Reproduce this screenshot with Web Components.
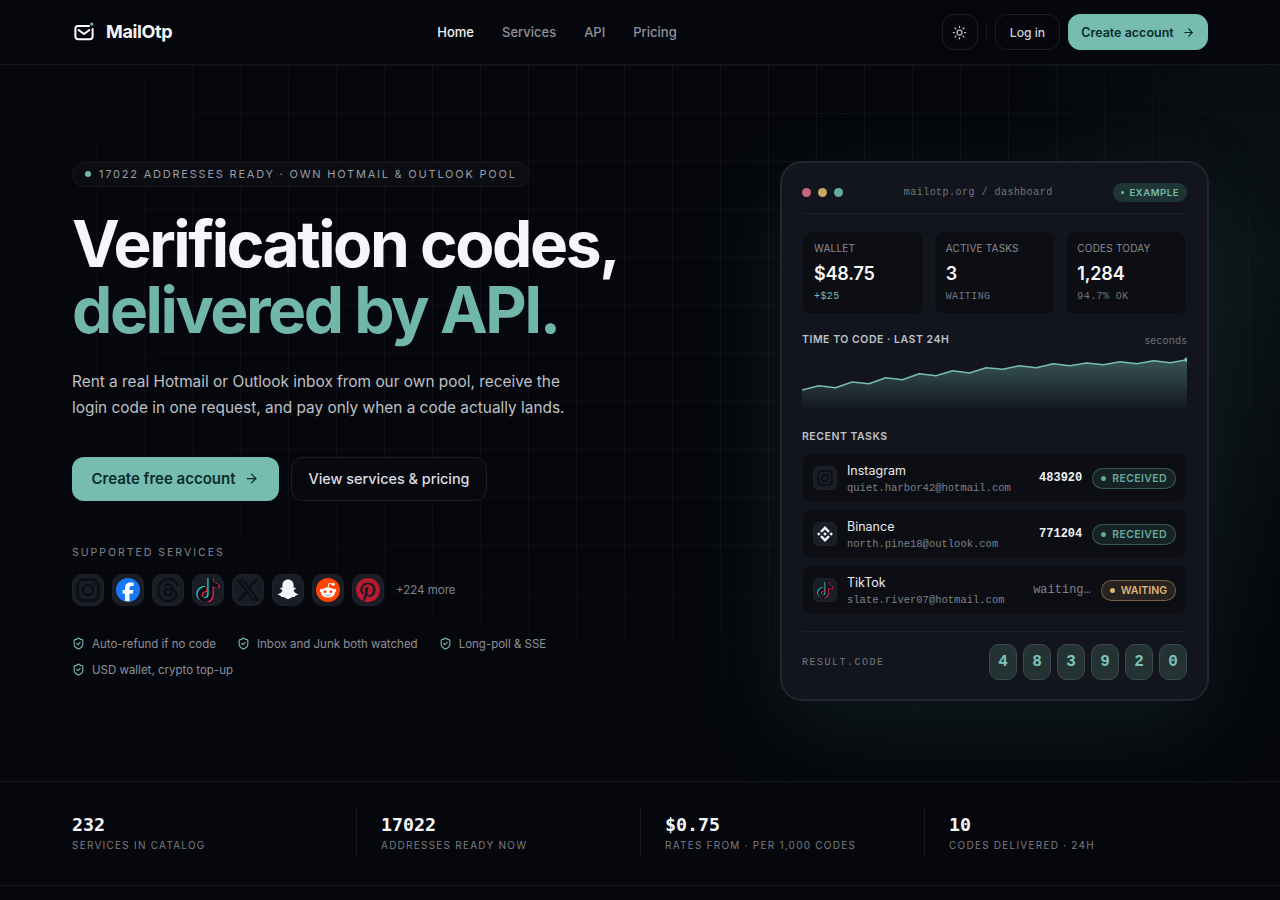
<!DOCTYPE html>
<html lang="en">
<head>
<meta charset="utf-8">
<title>MailOtp</title>
<style>
  html, body { margin: 0; padding: 0; background: #05070c; }
  body { font-family: Inter, "Liberation Sans", sans-serif; color: #e8eaee; height: 900px; overflow: hidden; }
</style>
</head>
<body>
<mo-header></mo-header>
<mo-hero>
  <mo-copy slot="copy"></mo-copy>
  <mo-dashboard slot="panel"></mo-dashboard>
</mo-hero>
<mo-stats>
  <mo-stat value="232" label="Services in catalog"></mo-stat>
  <mo-stat value="17022" label="Addresses ready now"></mo-stat>
  <mo-stat value="$0.75" label="Rates from · per 1,000 codes"></mo-stat>
  <mo-stat value="10" label="Codes delivered · 24h"></mo-stat>
</mo-stats>

<script>
const ARROW = `<svg width="14" height="14" viewBox="0 0 24 24" fill="none" stroke="currentColor" stroke-width="2" stroke-linecap="round" stroke-linejoin="round"><path d="M5 12h14"/><path d="m12 5 7 7-7 7"/></svg>`;

const TIKTOK_PATH = 'M12.525.02c1.31-.02 2.61-.01 3.91-.02.08 1.53.63 3.09 1.75 4.17 1.12 1.11 2.7 1.62 4.24 1.79v4.03c-1.44-.05-2.89-.35-4.2-.97-.57-.26-1.1-.59-1.62-.93-.01 2.92.01 5.84-.02 8.75-.08 1.4-.54 2.79-1.35 3.94-1.31 1.92-3.58 3.17-5.91 3.21-1.43.08-2.86-.31-4.08-1.03-2.02-1.19-3.44-3.37-3.65-5.71-.02-.5-.03-1-.01-1.49.18-1.9 1.12-3.72 2.58-4.96 1.66-1.44 3.98-2.13 6.15-1.72.02 1.48-.04 2.96-.04 4.44-.99-.32-2.15-.23-3.02.37-.63.41-1.11 1.04-1.36 1.75-.21.51-.15 1.07-.14 1.61.24 1.64 1.82 3.02 3.5 2.87 1.12-.01 2.19-.66 2.77-1.61.19-.33.4-.67.41-1.06.1-1.79.06-3.57.07-5.36.01-4.03-.01-8.05.02-12.07z';

const ICONS = {
  instagram: `<rect x="1.5" y="1.5" width="21" height="21" rx="6" fill="none" stroke="#0c0e13" stroke-width="2.4"/><circle cx="12" cy="12" r="5" fill="none" stroke="#0c0e13" stroke-width="2.4"/><circle cx="18.2" cy="5.8" r="1.4" fill="#0c0e13"/>`,
  facebook: `<circle cx="12" cy="12" r="11.4" fill="#fff"/><path fill="#1877F2" d="M9.101 23.691v-7.98H6.627v-3.667h2.474v-1.58c0-4.085 1.848-5.978 5.858-5.978.401 0 .955.042 1.468.103a8.68 8.68 0 0 1 1.141.195v3.325a8.623 8.623 0 0 0-.653-.036 26.805 26.805 0 0 0-.733-.009c-.707 0-1.259.096-1.675.309a1.686 1.686 0 0 0-.679.622c-.258.42-.374.995-.374 1.752v1.297h3.919l-.386 2.103-.287 1.564h-3.246v8.245C19.396 23.238 24 18.179 24 12.044c0-6.627-5.373-12-12-12s-12 5.373-12 12c0 5.628 3.874 10.35 9.101 11.647Z"/>`,
  threads: `<path fill="#0c0e13" d="M12.186 24h-.007c-3.581-.024-6.334-1.205-8.184-3.509C2.35 18.44 1.5 15.586 1.472 12.01v-.017c.03-3.579.879-6.43 2.525-8.482C5.845 1.205 8.6.024 12.18 0h.014c2.746.02 5.043.725 6.826 2.098 1.677 1.29 2.858 3.13 3.509 5.467l-2.04.569c-1.104-3.96-3.898-5.984-8.304-6.015-2.91.022-5.11.936-6.54 2.717C4.307 6.504 3.616 8.914 3.589 12c.027 3.086.718 5.496 2.057 7.164 1.43 1.783 3.631 2.698 6.54 2.717 2.623-.02 4.358-.631 5.8-2.045 1.647-1.613 1.618-3.593 1.09-4.798-.31-.71-.873-1.3-1.634-1.75-.192 1.352-.622 2.446-1.284 3.272-.886 1.102-2.14 1.704-3.73 1.79-1.202.065-2.361-.218-3.259-.801-1.063-.689-1.685-1.74-1.752-2.964-.065-1.19.408-2.285 1.33-3.082.88-.76 2.119-1.207 3.583-1.291a13.853 13.853 0 0 1 3.02.142c-.126-.742-.375-1.332-.75-1.757-.513-.586-1.308-.883-2.359-.89h-.029c-.844 0-1.992.232-2.721 1.32L7.734 7.847c.98-1.454 2.568-2.256 4.478-2.256h.044c3.194.02 5.097 1.975 5.287 5.388.108.046.216.094.321.142 1.49.7 2.58 1.761 3.154 3.07.797 1.82.871 4.79-1.548 7.158-1.85 1.81-4.094 2.628-7.277 2.65Zm1.003-11.69c-.242 0-.487.007-.739.021-1.836.103-2.98.946-2.916 2.143.067 1.256 1.452 1.839 2.784 1.767 1.224-.065 2.818-.543 3.086-3.71a10.5 10.5 0 0 0-2.215-.221z"/>`,
  tiktok: `<path fill="#25F4EE" transform="translate(-1.1 -.6)" d="${TIKTOK_PATH}"/><path fill="#FE2C55" transform="translate(1.1 .6)" d="${TIKTOK_PATH}"/><path fill="#0c0e13" d="${TIKTOK_PATH}"/>`,
  x: `<path fill="#0c0e13" d="M18.901 1.153h3.68l-8.04 9.19L24 22.846h-7.406l-5.8-7.584-6.638 7.584H.474l8.6-9.83L0 1.154h7.594l5.243 6.932ZM17.61 20.644h2.039L6.486 3.24H4.298Z"/>`,
  snapchat: `<path fill="#f2f5fa" d="M12 1.6c3.2 0 5.5 2.3 5.6 5.5l.05 2.7c.6.1 1.3-.2 1.75 0 .65.3.45 1.05-.2 1.35-.6.3-1.5.5-1.6 1 .4 1.7 2.1 3.4 4 3.9.65.2.55.85 0 1.05-.75.3-1.7.45-2.3.65-.3.4-.1 1.15-.55 1.25-.75.2-1.9-.2-3 .2-.95.4-1.9 1.8-3.75 1.8s-2.8-1.4-3.75-1.8c-1.1-.4-2.25 0-3-.2-.45-.1-.25-.85-.55-1.25-.6-.2-1.55-.35-2.3-.65-.55-.2-.65-.85 0-1.05 1.9-.5 3.6-2.2 4-3.9-.1-.5-1-.7-1.6-1-.65-.3-.85-1.05-.2-1.35.45-.2 1.15.1 1.75 0l.05-2.7C6.5 3.9 8.8 1.6 12 1.6z"/>`,
  reddit: `<circle cx="12" cy="12" r="12" fill="#FF4500"/><path d="M12 9.8 13 5.4l3.6.8" fill="none" stroke="#fff" stroke-width="1"/><circle cx="17.3" cy="6.3" r="1.5" fill="#fff"/><circle cx="5.7" cy="12.6" r="1.9" fill="#fff"/><circle cx="18.3" cy="12.6" r="1.9" fill="#fff"/><ellipse cx="12" cy="14.6" rx="7" ry="5" fill="#fff"/><circle cx="9.1" cy="13.7" r="1.4" fill="#FF4500"/><circle cx="14.9" cy="13.7" r="1.4" fill="#FF4500"/><path d="M9.2 16.9c1.6 1.1 4 1.1 5.6 0" fill="none" stroke="#8a8f99" stroke-width=".9" stroke-linecap="round"/>`,
  pinterest: `<path fill="#BD1A30" d="M12.017 0C5.396 0 .029 5.367.029 11.987c0 5.079 3.158 9.417 7.618 11.162-.105-.949-.199-2.403.041-3.439.219-.937 1.406-5.957 1.406-5.957s-.359-.72-.359-1.781c0-1.663.967-2.911 2.168-2.911 1.024 0 1.518.769 1.518 1.688 0 1.029-.653 2.567-.992 3.992-.285 1.193.6 2.165 1.775 2.165 2.128 0 3.768-2.245 3.768-5.487 0-2.861-2.063-4.869-5.008-4.869-3.41 0-5.409 2.562-5.409 5.199 0 1.033.394 2.143.889 2.741.099.12.112.225.085.345-.09.375-.293 1.199-.334 1.363-.053.225-.172.271-.401.165-1.495-.69-2.433-2.878-2.433-4.646 0-3.776 2.748-7.252 7.92-7.252 4.158 0 7.392 2.967 7.392 6.923 0 4.135-2.607 7.462-6.233 7.462-1.214 0-2.354-.629-2.758-1.379l-.749 2.848c-.269 1.045-1.004 2.352-1.498 3.146 1.123.345 2.306.535 3.55.535 6.607 0 11.985-5.365 11.985-11.987C23.97 5.39 18.592.026 11.985.026L12.017 0z"/>`,
  binance: `<path fill="#f4f5f8" d="M16.624 13.9202l2.7175 2.7154-7.353 7.353-7.353-7.352 2.7175-2.7164 4.6355 4.6595 4.6356-4.6595zm4.6366-4.6366L24 12l-2.7154 2.7164L18.5682 12l2.6924-2.7164zm-9.272.001l2.7163 2.6914-2.7164 2.7174v-.001L9.2721 12l2.7164-2.7154zm-9.2722-.001L5.4088 12l-2.6914 2.6924L0 12l2.7164-2.7164zM11.9885.0115l7.353 7.329-2.7174 2.7154-4.6356-4.6356-4.6355 4.6595-2.7174-2.7154 7.353-7.353z"/>`
};

class MoServiceIcon extends HTMLElement {
  constructor() {
    super();
    const box = parseInt(this.getAttribute('box') || '32');
    const size = parseInt(this.getAttribute('size') || '24');
    const radius = this.getAttribute('radius') || '10';
    this.attachShadow({ mode: 'open' }).innerHTML = `
      <style>
        :host { display: flex; align-items: center; justify-content: center; flex: none;
          width: ${box}px; height: ${box}px; border-radius: ${radius}px; box-sizing: border-box;
          background: #1a1d26; border: 1px solid #1f222c; }
        svg { display: block; }
      </style>
      <svg width="${size}" height="${size}" viewBox="0 0 24 24">${ICONS[this.getAttribute('name')]}</svg>`;
  }
}
customElements.define('mo-service-icon', MoServiceIcon);

const headerTemplate = document.createElement('template');
headerTemplate.innerHTML = `
  <style>
    :host { display: block; border-bottom: 1px solid #14171d; background: #05070c; }
    .bar { height: 64px; margin: 0 72px; display: flex; align-items: center; justify-content: space-between; }
    .logo { display: flex; align-items: center; gap: 10px; font-size: 18px; font-weight: 700; color: #f5f6f8; letter-spacing: -0.02em; width: 102px; }
    .logo svg { display: block; flex: none; }
    .logo span { margin-top: -2px; }
    nav { display: flex; gap: 28px; font-size: 13px; font-weight: 500; color: #8e929b; margin-right: 2px; }
    nav .active { color: #f2f3f5; }
    .actions { display: flex; align-items: center; gap: 8px; }
    .btn { height: 36px; box-sizing: border-box; border-radius: 12px; display: flex; align-items: center; justify-content: center;
      font-size: 12.5px; font-weight: 500; border: 1px solid #1b1e25; color: #dfe1e5; }
    .theme { width: 36px; color: #b9bcc2; }
    .sep { width: 1px; height: 20px; background: #15181e; }
    .login { width: 65px; font-size: 12.2px; color: #cfd1d6; }
    .create { width: 140px; gap: 8px; background: #76bcb1; border-color: #76bcb1; color: #0a2c2a; font-weight: 600; }
    .create svg { width: 13px; height: 13px; }
  </style>
  <div class="bar">
    <div class="logo">
      <svg width="24" height="24" viewBox="0 0 24 24" fill="none" stroke="#fff" stroke-width="2" stroke-linecap="round" stroke-linejoin="round">
        <path d="M17 6H6a2.6 2.6 0 0 0-2.6 2.6v8A2.6 2.6 0 0 0 6 19.2h12a2.6 2.6 0 0 0 2.6-2.6V9"/>
        <path d="m6.6 10 5.4 4 5.4-4"/>
        <circle cx="19.8" cy="4" r="1.6" fill="#76bcb1" stroke="none"/>
      </svg>
      <span>MailOtp</span>
    </div>
    <nav>
      <span class="active">Home</span>
      <span>Services</span>
      <span>API</span>
      <span>Pricing</span>
    </nav>
    <div class="actions">
      <div class="btn theme">
        <svg width="15" height="15" viewBox="0 0 24 24" fill="none" stroke="currentColor" stroke-width="2" stroke-linecap="round"><circle cx="12" cy="12" r="4"/><path d="M12 2v2M12 20v2M4.9 4.9l1.4 1.4M17.7 17.7l1.4 1.4M2 12h2M20 12h2M6.3 17.7l-1.4 1.4M19.1 4.9l-1.4 1.4"/></svg>
      </div>
      <div class="sep"></div>
      <div class="btn login">Log in</div>
      <div class="btn create">Create account ${ARROW}</div>
    </div>
  </div>
`;

class MoHeader extends HTMLElement {
  constructor() {
    super();
    this.attachShadow({ mode: 'open' }).appendChild(headerTemplate.content.cloneNode(true));
  }
}
customElements.define('mo-header', MoHeader);

const heroTemplate = document.createElement('template');
heroTemplate.innerHTML = `
  <style>
    :host { display: block; position: relative; height: 716px; overflow: hidden; }
    .grid { position: absolute; inset: 0;
      background-image: linear-gradient(rgba(255,255,255,.045) 1px, transparent 1px), linear-gradient(90deg, rgba(255,255,255,.045) 1px, transparent 1px);
      background-size: 48px 48px;
      -webkit-mask-image: radial-gradient(ellipse 62% 72% at 50% 28%, #000 45%, transparent 100%);
      mask-image: radial-gradient(ellipse 62% 72% at 50% 28%, #000 45%, transparent 100%); }
    .glow { position: absolute; inset: 0;
      background: radial-gradient(ellipse 280px 380px at 1260px 200px, rgba(90,170,155,.07), transparent 100%); }
    .inner { position: relative; margin: 0 71px 0 72px; padding-top: 96px; display: flex; justify-content: space-between; align-items: flex-start; }
  </style>
  <div class="grid"></div>
  <div class="glow"></div>
  <div class="inner">
    <slot name="copy"></slot>
    <slot name="panel"></slot>
  </div>
`;

class MoHero extends HTMLElement {
  constructor() {
    super();
    this.attachShadow({ mode: 'open' }).appendChild(heroTemplate.content.cloneNode(true));
  }
}
customElements.define('mo-hero', MoHero);

const copyTemplate = document.createElement('template');
copyTemplate.innerHTML = `
  <style>
    :host { display: block; width: 600px; }
    .eyebrow { display: inline-flex; align-items: center; gap: 8px; height: 25px; box-sizing: border-box; padding: 0 12px; border-radius: 999px;
      border: 1px solid #15181f; background: #0b0d13; font-size: 11px; font-weight: 400; letter-spacing: .162em; color: #9a9da4; white-space: nowrap; }
    .eyebrow i { width: 6px; height: 6px; border-radius: 50%; background: #76bcb1; }
    h1 { margin: 24px 0 0; font-size: 64px; line-height: 66px; font-weight: 700; letter-spacing: -0.038em; color: #f5f6fa; white-space: nowrap; }
    h1 span { color: #70b6ab; display: block; }
    p { margin: 26px 0 0; font-size: 15.4px; line-height: 26px; color: #bec1c7; white-space: nowrap; }
    .cta { display: flex; gap: 12px; margin-top: 36px; }
    .cta div { height: 44px; box-sizing: border-box; border-radius: 12px; display: flex; align-items: center; justify-content: center; font-weight: 500; }
    .primary { width: 207px; gap: 9px; background: #76bcb1; color: #0a2c2a; font-size: 15px; font-weight: 600 !important; }
    .primary svg { width: 15px; height: 15px; }
    .secondary { width: 196px; border: 1px solid #1b1e25; color: #dcdee2; background: #07090e; font-size: 14.4px; }
    .label { margin-top: 45px; font-size: 10.5px; line-height: 13px; letter-spacing: .19em; color: #83868d; }
    .services { display: flex; align-items: center; gap: 8px; margin-top: 15px; }
    .more { margin-left: 4px; font-size: 11.5px; color: #80838a; }
    ul { list-style: none; margin: 30px 0 0; padding: 0; display: flex; flex-wrap: wrap; gap: 10px 21px; width: 500px; }
    li { display: flex; align-items: center; gap: 7px; font-size: 11.5px; line-height: 16px; color: #8e9198; }
    li svg { flex: none; }
  </style>
  <div class="eyebrow"><i></i>17022 ADDRESSES READY · OWN HOTMAIL &amp; OUTLOOK POOL</div>
  <h1>Verification codes,<span>delivered by API.</span></h1>
  <p>Rent a real Hotmail or Outlook inbox from our own pool, receive the<br>login code in one request, and pay only when a code actually lands.</p>
  <div class="cta">
    <div class="primary">Create free account ${ARROW}</div>
    <div class="secondary">View services &amp; pricing</div>
  </div>
  <div class="label">SUPPORTED SERVICES</div>
  <div class="services">
    <mo-service-icon name="instagram"></mo-service-icon>
    <mo-service-icon name="facebook"></mo-service-icon>
    <mo-service-icon name="threads"></mo-service-icon>
    <mo-service-icon name="tiktok"></mo-service-icon>
    <mo-service-icon name="x"></mo-service-icon>
    <mo-service-icon name="snapchat"></mo-service-icon>
    <mo-service-icon name="reddit"></mo-service-icon>
    <mo-service-icon name="pinterest"></mo-service-icon>
    <span class="more">+224 more</span>
  </div>
  <ul id="perks"></ul>
`;

const SHIELD = `<svg width="13" height="13" viewBox="0 0 24 24" fill="none" stroke="#76bcb1" stroke-width="2" stroke-linecap="round" stroke-linejoin="round"><path d="M20 13c0 5-3.5 7.5-7.66 8.95a1 1 0 0 1-.67-.01C7.5 20.5 4 18 4 13V6a1 1 0 0 1 1-1c2 0 4.5-1.2 6.24-2.72a1.17 1.17 0 0 1 1.52 0C14.51 3.81 17 5 19 5a1 1 0 0 1 1 1z"/><path d="m9 12 2 2 4-4"/></svg>`;

class MoCopy extends HTMLElement {
  constructor() {
    super();
    this.attachShadow({ mode: 'open' }).appendChild(copyTemplate.content.cloneNode(true));
    this.shadowRoot.querySelector('#perks').innerHTML = [
      'Auto-refund if no code',
      'Inbox and Junk both watched',
      'Long-poll &amp; SSE',
      'USD wallet, crypto top-up',
    ].map((t) => `<li>${SHIELD}${t}</li>`).join('');
  }
}
customElements.define('mo-copy', MoCopy);

class MoTile extends HTMLElement {
  constructor() {
    super();
    const good = this.hasAttribute('good');
    this.attachShadow({ mode: 'open' }).innerHTML = `
      <style>
        :host { display: block; height: 84px; box-sizing: border-box; padding: 10px 11px 0; border-radius: 10px; background: #0c0e14; border: 1px solid #15181f; }
        .k { font-size: 10px; line-height: 13px; letter-spacing: .02em; color: #8a8d94; white-space: nowrap; }
        .v { margin-top: 7px; font-size: 18px; line-height: 24px; font-weight: 600; letter-spacing: -.01em; color: #f6f7f9; }
        .s { margin-top: 4px; font-family: "Liberation Mono", monospace; font-size: 10px; line-height: 13px; letter-spacing: .04em; color: ${good ? '#76bcb1' : '#74777e'}; }
      </style>
      <div class="k">${this.getAttribute('label')}</div>
      <div class="v">${this.getAttribute('value')}</div>
      <div class="s">${this.getAttribute('sub')}</div>`;
  }
}
customElements.define('mo-tile', MoTile);

class MoTask extends HTMLElement {
  constructor() {
    super();
    const waiting = this.getAttribute('status') === 'WAITING';
    const tone = waiting ? '224,180,118' : '100,170,158';
    this.attachShadow({ mode: 'open' }).innerHTML = `
      <style>
        :host { display: flex; align-items: center; height: 50px; box-sizing: border-box; padding: 0 10px; border-radius: 10px; background: #0c0e14; border: 1px solid #13161c; }
        .who { margin-left: 10px; flex: 1; min-width: 0; padding-top: 2px; }
        .name { font-size: 12.5px; line-height: 16px; color: #e9ebee; }
        .mail { font-family: "Liberation Mono", monospace; font-size: 10.5px; line-height: 14px; margin-top: 2px; color: #7d8086; white-space: nowrap; }
        .code { font-family: "Liberation Mono", monospace; font-size: 12px; font-weight: 700; color: #eef0f3; margin-right: 10px; }
        .code.wait { font-weight: 400; color: #7d8086; }
        .pill { display: flex; align-items: center; gap: 6px; height: 21px; box-sizing: border-box; padding: 0 8px; border-radius: 999px; font-size: 10.5px; font-weight: 600; letter-spacing: ${waiting ? '0' : '.035em'};
          color: rgb(${tone}); border: 1px solid rgba(${tone},.42); background: rgba(${tone},.13); white-space: nowrap; }
        .pill i { width: 5px; height: 5px; border-radius: 50%; background: rgb(${tone}); }
      </style>
      <mo-service-icon name="${this.getAttribute('icon')}" box="24" size="16" radius="6"></mo-service-icon>
      <div class="who">
        <div class="name">${this.getAttribute('name')}</div>
        <div class="mail">${this.getAttribute('mail')}</div>
      </div>
      <span class="code ${waiting ? 'wait' : ''}">${this.getAttribute('code')}</span>
      <span class="pill"><i></i>${this.getAttribute('status')}</span>`;
  }
}
customElements.define('mo-task', MoTask);

const dashTemplate = document.createElement('template');
dashTemplate.innerHTML = `
  <style>
    :host { display: block; width: 429px; height: 540px; box-sizing: border-box; padding: 0 20px; border-radius: 22px;
      background: #12151d; border: 2px solid #22262e;
      box-shadow: 0 30px 100px rgba(90,170,155,.12); }
    .top { height: 51px; box-sizing: border-box; padding-top: 8px; display: flex; align-items: center; justify-content: space-between; border-bottom: 1px solid #1d2028; }
    .dots { display: flex; gap: 7px; flex: none; }
    .dots i { width: 9px; height: 9px; border-radius: 50%; }
    .url { font-family: "Liberation Mono", monospace; font-size: 10px; letter-spacing: .048em; color: #74777e; }
    .tag { display: flex; align-items: center; gap: 5px; height: 19px; padding: 0 8px; border-radius: 999px; background: #1f3533; color: #76bcb1; font-size: 9.5px; font-weight: 600; letter-spacing: .06em; }
    .tag i { width: 3px; height: 3px; border-radius: 50%; background: #76bcb1; }
    .tiles { display: grid; grid-template-columns: repeat(3, 1fr); gap: 10px; margin-top: 17px; }
    .head { display: flex; justify-content: space-between; align-items: center; margin-top: 18px; height: 13px; }
    .title { font-size: 10.5px; font-weight: 600; letter-spacing: .05em; color: #bfc2c8; }
    .unit { font-family: Inter, sans-serif; font-size: 10px; letter-spacing: .03em; color: #6e7178; }
    svg.chart { display: block; margin-top: 9px; }
    .recent { margin-top: 19px; height: 13px; }
    .tasks { display: flex; flex-direction: column; gap: 6px; margin-top: 10px; }
    .result { display: flex; justify-content: space-between; align-items: center; margin-top: 16px; padding-top: 12px; border-top: 1px solid #1d2028; }
    .result .lbl { font-family: "Liberation Mono", monospace; font-size: 10px; letter-spacing: .15em; color: #74777e; }
    .digits { display: flex; gap: 6px; }
    .digits span { width: 28px; height: 36px; box-sizing: border-box; border-radius: 10px; display: flex; align-items: center; justify-content: center;
      font-family: "Liberation Mono", monospace; font-size: 16px; font-weight: 700; color: #7cc4b8; background: #243234; border: 1px solid #3c4b4e; }
  </style>
  <div class="top">
    <div class="dots">
      <i style="background:#c9647f"></i><i style="background:#c9a566"></i><i style="background:#64aca1"></i>
    </div>
    <div class="url">mailotp.org / dashboard</div>
    <div class="tag"><i></i>EXAMPLE</div>
  </div>
  <div class="tiles">
    <mo-tile label="WALLET" value="$48.75" sub="+$25" good></mo-tile>
    <mo-tile label="ACTIVE TASKS" value="3" sub="WAITING"></mo-tile>
    <mo-tile label="CODES TODAY" value="1,284" sub="94.7% OK"></mo-tile>
  </div>
  <div class="head"><span class="title">TIME TO CODE · LAST 24H</span><span class="unit">seconds</span></div>
  <svg class="chart" width="385" height="56" viewBox="0 0 385 56">
    <defs><linearGradient id="fade" x1="0" y1="0" x2="0" y2="1"><stop offset="0" stop-color="#76bcb1" stop-opacity=".38"/><stop offset="1" stop-color="#76bcb1" stop-opacity="0"/></linearGradient></defs>
    <path id="area" fill="url(#fade)"/>
    <polyline id="line" fill="none" stroke="#76bcb1" stroke-width="1.5" stroke-linejoin="round"/>
    <circle cx="384.5" cy="4.7" r="2.2" fill="#76bcb1"/>
  </svg>
  <div class="title recent">RECENT TASKS</div>
  <div class="tasks">
    <mo-task icon="instagram" name="Instagram" mail="quiet.harbor42@hotmail.com" code="483920" status="RECEIVED"></mo-task>
    <mo-task icon="binance" name="Binance" mail="north.pine18@outlook.com" code="771204" status="RECEIVED"></mo-task>
    <mo-task icon="tiktok" name="TikTok" mail="slate.river07@hotmail.com" code="waiting…" status="WAITING"></mo-task>
  </div>
  <div class="result">
    <span class="lbl">RESULT.CODE</span>
    <div class="digits"><span>4</span><span>8</span><span>3</span><span>9</span><span>2</span><span>0</span></div>
  </div>
`;

class MoDashboard extends HTMLElement {
  constructor() {
    super();
    this.attachShadow({ mode: 'open' }).appendChild(dashTemplate.content.cloneNode(true));
    const ys = [35, 30.7, 32.7, 27, 28.7, 22.7, 24.7, 18.7, 20.7, 15.7, 18, 12.7, 14.3, 10.7, 12.7, 8.7, 10.7, 8, 9.7, 6.7, 8.7, 5.7, 7.7, 4.7];
    const pts = ys.map((y, i) => `${(i * 385 / 23).toFixed(1)},${y}`);
    this.shadowRoot.querySelector('#line').setAttribute('points', pts.join(' '));
    this.shadowRoot.querySelector('#area').setAttribute('d', `M0,56 L${pts.join(' L')} L385,56 Z`);
  }
}
customElements.define('mo-dashboard', MoDashboard);

class MoStats extends HTMLElement {
  constructor() {
    super();
    this.attachShadow({ mode: 'open' }).innerHTML = `
      <style>
        :host { display: block; height: 105px; box-sizing: border-box; border-top: 1px solid #14171d; border-bottom: 1px solid #14171d; background: #05070c; }
        .row { margin: 0 72px; padding-top: 26px; display: grid; grid-template-columns: repeat(4, 1fr); }
      </style>
      <div class="row"><slot></slot></div>`;
  }
}
customElements.define('mo-stats', MoStats);

class MoStat extends HTMLElement {
  constructor() {
    super();
    this.attachShadow({ mode: 'open' }).innerHTML = `
      <style>
        :host { display: block; height: 48px; box-sizing: border-box; padding: 4px 0 0 24px; border-left: 1px solid #14171d; }
        :host(:first-child) { padding-left: 0; border-left: 0; }
        .v { font-family: "DejaVu Sans Mono", monospace; font-size: 18.3px; line-height: 26px; font-weight: 700; color: #f5f6f8; }
        .l { margin-top: 1px; font-size: 10px; line-height: 13px; letter-spacing: .124em; color: #7a7d84; text-transform: uppercase; white-space: nowrap; }
      </style>
      <div class="v">${this.getAttribute('value')}</div>
      <div class="l">${this.getAttribute('label')}</div>`;
  }
}
customElements.define('mo-stat', MoStat);
</script>
</body>
</html>
